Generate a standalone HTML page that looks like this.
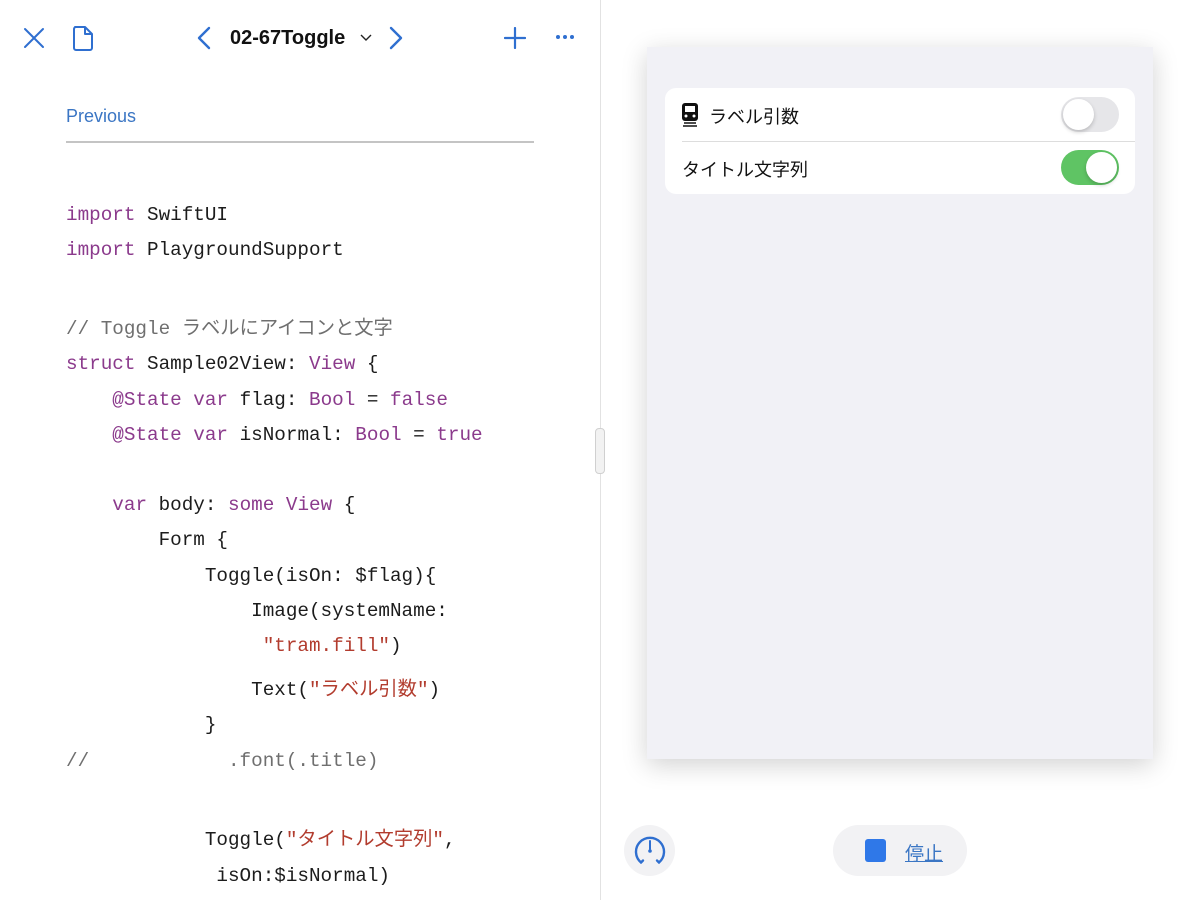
<!DOCTYPE html>
<html><head><meta charset="utf-8"><style>
body{margin:0;width:1200px;height:900px;background:#fff;position:relative;overflow:hidden;font-family:"Liberation Sans","Noto Sans CJK JP",sans-serif}
.l{position:absolute;left:0;top:0;width:600px;height:900px;border-right:1px solid #e2e2e2}
.c{position:absolute;font-family:"Liberation Mono","Noto Sans CJK JP",monospace;font-size:19.3px;line-height:24px;white-space:pre;color:#1c1c1c}
.k{color:#8b3a8c}.s{color:#b23c2e}.m{color:#6f6f6f}
.ic{position:absolute}
</style></head><body>
<div class="l">
<svg class="ic" style="left:22px;top:26px" width="24" height="24" viewBox="0 0 24 24"><path d="M3 3L21 21M21 3L3 21" stroke="#2f6fd0" stroke-width="2" stroke-linecap="round"/></svg>
<svg class="ic" style="left:71px;top:24px" width="24" height="28" viewBox="0 0 24 28"><path d="M4 3h10l7 7v14a2 2 0 0 1-2 2H5a2 2 0 0 1-2-2V5a2 2 0 0 1 2-2zM14 3v7h7" fill="none" stroke="#2f6fd0" stroke-width="2" stroke-linejoin="round"/></svg>
<svg class="ic" style="left:196px;top:26px" width="16" height="24" viewBox="0 0 16 24"><path d="M13 2L3 12l10 10" fill="none" stroke="#2f6fd0" stroke-width="2.4" stroke-linecap="round" stroke-linejoin="round"/></svg>
<div style="position:absolute;left:230px;top:27px;font-size:20px;font-weight:bold;color:#111">02-67Toggle</div>
<svg class="ic" style="left:360px;top:34px" width="12" height="8" viewBox="0 0 12 8"><path d="M1 1l5 5 5-5" fill="none" stroke="#222" stroke-width="1.4"/></svg>
<svg class="ic" style="left:388px;top:26px" width="16" height="24" viewBox="0 0 16 24"><path d="M3 2l10 10L3 22" fill="none" stroke="#2f6fd0" stroke-width="2.4" stroke-linecap="round" stroke-linejoin="round"/></svg>
<svg class="ic" style="left:504px;top:27px" width="22" height="22" viewBox="0 0 22 22"><path d="M11 1v20M1 11h20" stroke="#2f6fd0" stroke-width="2.2" stroke-linecap="round"/></svg>
<svg class="ic" style="left:555px;top:34px" width="20" height="6" viewBox="0 0 20 6"><circle cx="3" cy="3" r="2" fill="#2f6fd0"/><circle cx="10" cy="3" r="2" fill="#2f6fd0"/><circle cx="17" cy="3" r="2" fill="#2f6fd0"/></svg>
<div style="position:absolute;left:66px;top:106px;font-size:18px;color:#3b76c4">Previous</div>
<div style="position:absolute;left:66px;top:141px;width:468px;height:2px;background:#c4c4c4"></div>
<div class="c" style="left:66px;top:203px"><span class="k">import</span> SwiftUI</div>
<div class="c" style="left:66px;top:238px"><span class="k">import</span> PlaygroundSupport</div>
<div class="c m" style="left:66px;top:317px">// Toggle ラベルにアイコンと文字</div>
<div class="c" style="left:66px;top:352px"><span class="k">struct</span> Sample02View: <span class="k">View</span> {</div>
<div class="c" style="left:66px;top:388px">    <span class="k">@State var</span> flag: <span class="k">Bool</span> = <span class="k">false</span></div>
<div class="c" style="left:66px;top:423px">    <span class="k">@State var</span> isNormal: <span class="k">Bool</span> = <span class="k">true</span></div>
<div class="c" style="left:66px;top:493px">    <span class="k">var</span> body: <span class="k">some View</span> {</div>
<div class="c" style="left:66px;top:528px">        Form {</div>
<div class="c" style="left:66px;top:564px">            Toggle(isOn: $flag){</div>
<div class="c" style="left:66px;top:599px">                Image(systemName:</div>
<div class="c" style="left:66px;top:634px">                 <span class="s">"tram.fill"</span>)</div>
<div class="c" style="left:66px;top:678px">                Text(<span class="s">"ラベル引数"</span>)</div>
<div class="c" style="left:66px;top:713px">            }</div>
<div class="c" style="left:66px;top:749px"><span class="m">//            .font(.title)</span></div>
<div class="c" style="left:66px;top:828px">            Toggle(<span class="s">"タイトル文字列"</span>,</div>
<div class="c" style="left:66px;top:864px">             isOn:$isNormal)</div>
</div>
<div style="position:absolute;left:595px;top:428px;width:8px;height:44px;border-radius:4px;background:#f2f2f2;border:1px solid #d0d0d0"></div>
<div style="position:absolute;left:647px;top:47px;width:506px;height:712px;background:#f1f1f6;box-shadow:0 6px 24px rgba(0,0,0,0.18)">
 <div style="position:absolute;left:18px;top:41px;width:470px;height:106px;background:#fff;border-radius:11px">
  <svg class="ic" style="left:16px;top:14px" width="18" height="26" viewBox="0 0 18 26"><rect x="1" y="1" width="16" height="18" rx="3" fill="#111"/><rect x="4" y="4" width="10" height="6" fill="#fff"/><circle cx="5" cy="14" r="1.5" fill="#fff"/><circle cx="13" cy="14" r="1.5" fill="#fff"/><path d="M3 21h12M2 24h14" stroke="#111" stroke-width="1.5"/></svg>
  <div style="position:absolute;left:44px;top:15px;font-size:18px;color:#111">ラベル引数</div>
  <div style="position:absolute;left:396px;top:9px;width:58px;height:35px;border-radius:18px;background:#e6e6e9"><div style="position:absolute;left:2px;top:2px;width:31px;height:31px;border-radius:50%;background:#fff;box-shadow:0 2px 4px rgba(0,0,0,.2)"></div></div>
  <div style="position:absolute;left:17px;top:53px;right:0;height:1px;background:#ddd"></div>
  <div style="position:absolute;left:17px;top:68px;font-size:18px;color:#111">タイトル文字列</div>
  <div style="position:absolute;left:396px;top:62px;width:58px;height:35px;border-radius:18px;background:#5fc464"><div style="position:absolute;left:25px;top:2px;width:31px;height:31px;border-radius:50%;background:#fff;box-shadow:0 2px 4px rgba(0,0,0,.2)"></div></div>
 </div>
</div>
<div style="position:absolute;left:624px;top:825px;width:51px;height:51px;border-radius:50%;background:#f2f2f4"></div>
<svg class="ic" style="left:632px;top:833px" width="36" height="36" viewBox="0 0 36 36"><path d="M9 29.5A14 14 0 1 1 27 29.5" fill="none" stroke="#2f6fd0" stroke-width="2.4" stroke-linecap="round"/><path d="M9 29.5l2-2M27 29.5l-2-2" stroke="#2f6fd0" stroke-width="2.4" stroke-linecap="round"/><path d="M18 8v8" stroke="#2f6fd0" stroke-width="2" stroke-linecap="round"/><circle cx="18" cy="18" r="1.8" fill="#2f6fd0"/></svg>
<div style="position:absolute;left:833px;top:825px;width:134px;height:51px;border-radius:26px;background:#f2f2f4"></div>
<div style="position:absolute;left:865px;top:839px;width:21px;height:23px;border-radius:3px;background:#2f78e8"></div>
<div style="position:absolute;left:905px;top:839px;font-size:19px;color:#3b76c4;text-decoration:underline">停止</div>
</body></html>
